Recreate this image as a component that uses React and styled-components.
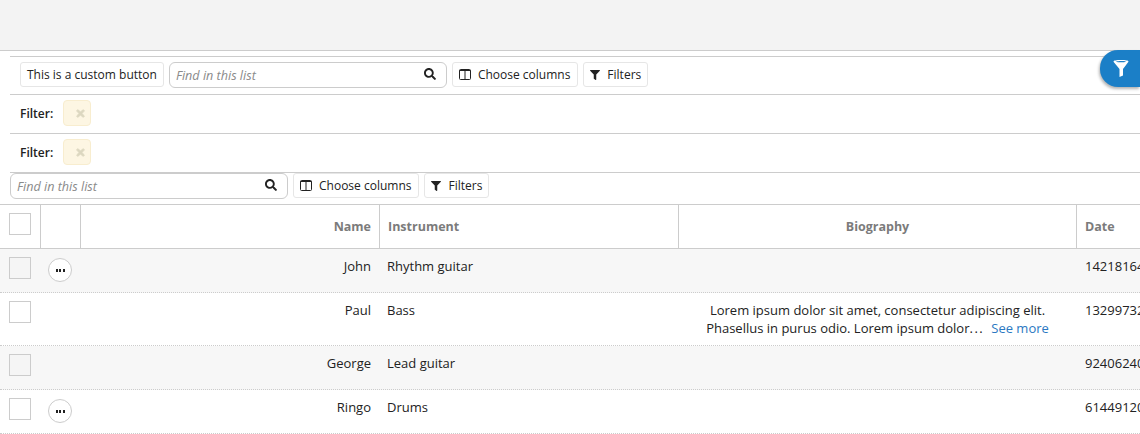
import React from "react";
import styled, { createGlobalStyle } from "styled-components";
import { FaSearch, FaFilter, FaTimes } from "react-icons/fa";

const Global = createGlobalStyle`
  html, body { margin: 0; padding: 0; background: #fff; }
  body { font-family: "Open Sans", "Noto Sans", sans-serif; font-size: 12px; color: #222; overflow: hidden; }
  * { box-sizing: border-box; }
`;

const Page = styled.div`
  position: relative;
  width: 1140px;
  height: 434px;
  overflow: hidden;
`;
const TopBar = styled.div`
  height: 51px;
  background: #f3f3f3;
  border-bottom: 1px solid #ccc;
`;
const Content = styled.div`
  padding: 5px 0 0 10px;
`;
const ToolRow = styled.div`
  display: flex;
  align-items: flex-start;
  gap: 5px;
  height: ${(p) => p.$h}px;
  padding: ${(p) => p.$top}px 0 0 ${(p) => p.$pad}px;
  border-top: 1px solid #ccc;
`;
const Btn = styled.button`
  display: flex;
  align-items: center;
  gap: ${(p) => p.$gap || 0}px;
  height: 25px;
  padding: 0 ${(p) => p.$right || 6}px 0 6px;
  background: #fff;
  border: 1px solid #e6e6e6;
  border-radius: 3px;
  font: 12px "Open Sans", sans-serif;
  color: #222;
`;
const SearchBox = styled.div`
  display: flex;
  align-items: center;
  justify-content: space-between;
  width: 278px;
  height: 26px;
  padding: 0 10px 0 6px;
  border: 1px solid #ccc;
  border-radius: 6px;
  font: italic 12.6px "Open Sans", sans-serif;
  color: #8a8a8a;
  svg { color: #222; font-size: 12px; margin-top: -3px; }
`;
const FilterLabel = styled.span`
  font-weight: 600;
  font-size: 12px;
  line-height: 28px;
  margin-right: 5px;
`;
const Chip = styled.span`
  display: flex;
  align-items: center;
  justify-content: flex-end;
  width: 28px;
  height: 26px;
  padding-right: 4px;
  background: #fdf6e3;
  border: 1px solid #f8edcf;
  border-radius: 4px;
  color: #dcd7c0;
  font-size: 11px;
  svg { stroke: #dcd7c0; stroke-width: 40px; }
`;
const Table = styled.div`
  border-top: 1px solid #ccc;
  width: 1240px;
`;
const Row = styled.div`
  display: grid;
  grid-template-columns: 41px 40px 299px 299px 398px 163px;
  height: ${(p) => p.$h}px;
  background: ${(p) => (p.$alt ? "#f7f7f7" : "#fff")};
  border-bottom: 1px ${(p) => (p.$head ? "solid" : "dotted")} #ccc;
`;
const HeadCell = styled.div`
  display: flex;
  align-items: center;
  justify-content: ${(p) => p.$align || "flex-start"};
  padding: 0 8px;
  border-right: 1px solid #ccc;
  font-weight: 700;
  font-size: 12.5px;
  color: #7b7b7b;
`;
const HeadCheckCell = styled(HeadCell)`
  align-items: flex-start;
  padding: 8px 0 0 9px;
`;
const Cell = styled.div`
  padding: 8px ${(p) => (p.$align === "right" ? 9 : 8)}px 0 7px;
  line-height: 18px;
  font-size: 13px;
  text-align: ${(p) => p.$align || "left"};
  white-space: nowrap;
  overflow: hidden;
`;
const DateCell = styled(Cell)`
  padding-left: 8px;
`;
const CheckCell = styled.div`
  padding: 8px 0 0 9px;
`;
const Check = styled.div`
  width: 22px;
  height: 22px;
  background: ${(p) => (p.$alt ? "#f5f5f5" : "#fff")};
  border: 1px solid #ccc;
`;
const MoreCell = styled.div`
  padding: 9px 0 0 7px;
`;
const MoreBtn = styled.div`
  display: flex;
  align-items: center;
  justify-content: center;
  gap: 1.5px;
  width: 24px;
  height: 24px;
  background: #fff;
  border: 1px solid #ccc;
  border-radius: 50%;
`;
const Dot = styled.i`
  width: 2px;
  height: 3px;
  background: #222;
`;
const Dots = styled.span`
  letter-spacing: 1.5px;
`;
const SeeMore = styled.a`
  color: #2a78c2;
  margin-left: 7px;
`;
const FloatBtn = styled.div`
  position: absolute;
  top: 50px;
  right: 0;
  width: 40px;
  height: 37px;
  display: flex;
  align-items: center;
  padding-left: 13px;
  background: #1b7fc7;
  border-radius: 18px 0 0 18px;
  box-shadow: -1px 2px 3px rgba(0, 0, 0, 0.3);
  color: #fff;
`;

const ColumnsIcon = () => (
  <svg width="12" height="11" viewBox="0 0 12 11" fill="none" stroke="#222" strokeWidth="1">
    <rect x="0.5" y="0.5" width="11" height="10" rx="1" />
    <path d="M6 0.5V10.5M0.5 1.5H11.5" />
  </svg>
);
const FunnelIcon = () => (
  <svg width="16" height="17" viewBox="0 0 16 17" fill="#fff">
    <path fillRule="evenodd" d="M0.5 1.5C0.5 0.5 3.5 0 8 0s7.5 0.5 7.5 1.5c0 0.4-0.3 0.8-0.8 1.2L10 9v6.5L6.5 17V9L1.3 2.7C0.8 2.3 0.5 1.9 0.5 1.5ZM3 1.7C4 2.1 6 2.3 8 2.3s4-0.2 5-0.6C12 1.3 10 1.1 8 1.1s-4 0.2-5 0.6Z" />
  </svg>
);

const Search = () => (
  <SearchBox>
    Find in this list
    <FaSearch />
  </SearchBox>
);
const ColumnActions = () => (
  <>
    <Btn $gap={7} $right={7}><ColumnsIcon />Choose columns</Btn>
    <Btn $gap={7}><FaFilter size={10} />Filters</Btn>
  </>
);
const More = () => (
  <MoreBtn><Dot /><Dot /><Dot /></MoreBtn>
);

const rows = [
  { name: "John", inst: "Rhythm guitar", date: "1421816400000", h: 44, alt: true, more: true },
  { name: "Paul", inst: "Bass", date: "1329973200000", h: 53, bio: true },
  { name: "George", inst: "Lead guitar", date: "92406240000", h: 44, alt: true },
  { name: "Ringo", inst: "Drums", date: "61449120000", h: 44, more: true },
];

export default function App() {
  return (
    <Page>
      <Global />
      <TopBar />
      <Content>
        <ToolRow $h={38} $top={5} $pad={10}>
          <Btn>This is a custom button</Btn>
          <Search />
          <ColumnActions />
        </ToolRow>
        <ToolRow $h={39} $top={5} $pad={10}>
          <FilterLabel>Filter:</FilterLabel>
          <Chip><FaTimes /></Chip>
        </ToolRow>
        <ToolRow $h={39} $top={5} $pad={10}>
          <FilterLabel>Filter:</FilterLabel>
          <Chip><FaTimes /></Chip>
        </ToolRow>
        <ToolRow $h={32} $top={0} $pad={0}>
          <Search />
          <ColumnActions />
        </ToolRow>
      </Content>
      <Table>
        <Row $head $h={44}>
          <HeadCheckCell><Check /></HeadCheckCell>
          <HeadCell />
          <HeadCell $align="flex-end">Name</HeadCell>
          <HeadCell>Instrument</HeadCell>
          <HeadCell $align="center">Biography</HeadCell>
          <HeadCell>Date</HeadCell>
        </Row>
        {rows.map((r) => (
          <Row key={r.name} $h={r.h} $alt={r.alt}>
            <CheckCell><Check $alt={r.alt} /></CheckCell>
            <MoreCell>{r.more && <More />}</MoreCell>
            <Cell $align="right">{r.name}</Cell>
            <Cell>{r.inst}</Cell>
            <Cell $align="center">
              {r.bio && (
                <>
                  Lorem ipsum dolor sit amet, consectetur adipiscing elit.
                  <br />
                  Phasellus in purus odio. Lorem ipsum dolor<Dots>...</Dots>
                  <SeeMore>See more</SeeMore>
                </>
              )}
            </Cell>
            <DateCell>{r.date}</DateCell>
          </Row>
        ))}
      </Table>
      <FloatBtn><FunnelIcon /></FloatBtn>
    </Page>
  );
}
